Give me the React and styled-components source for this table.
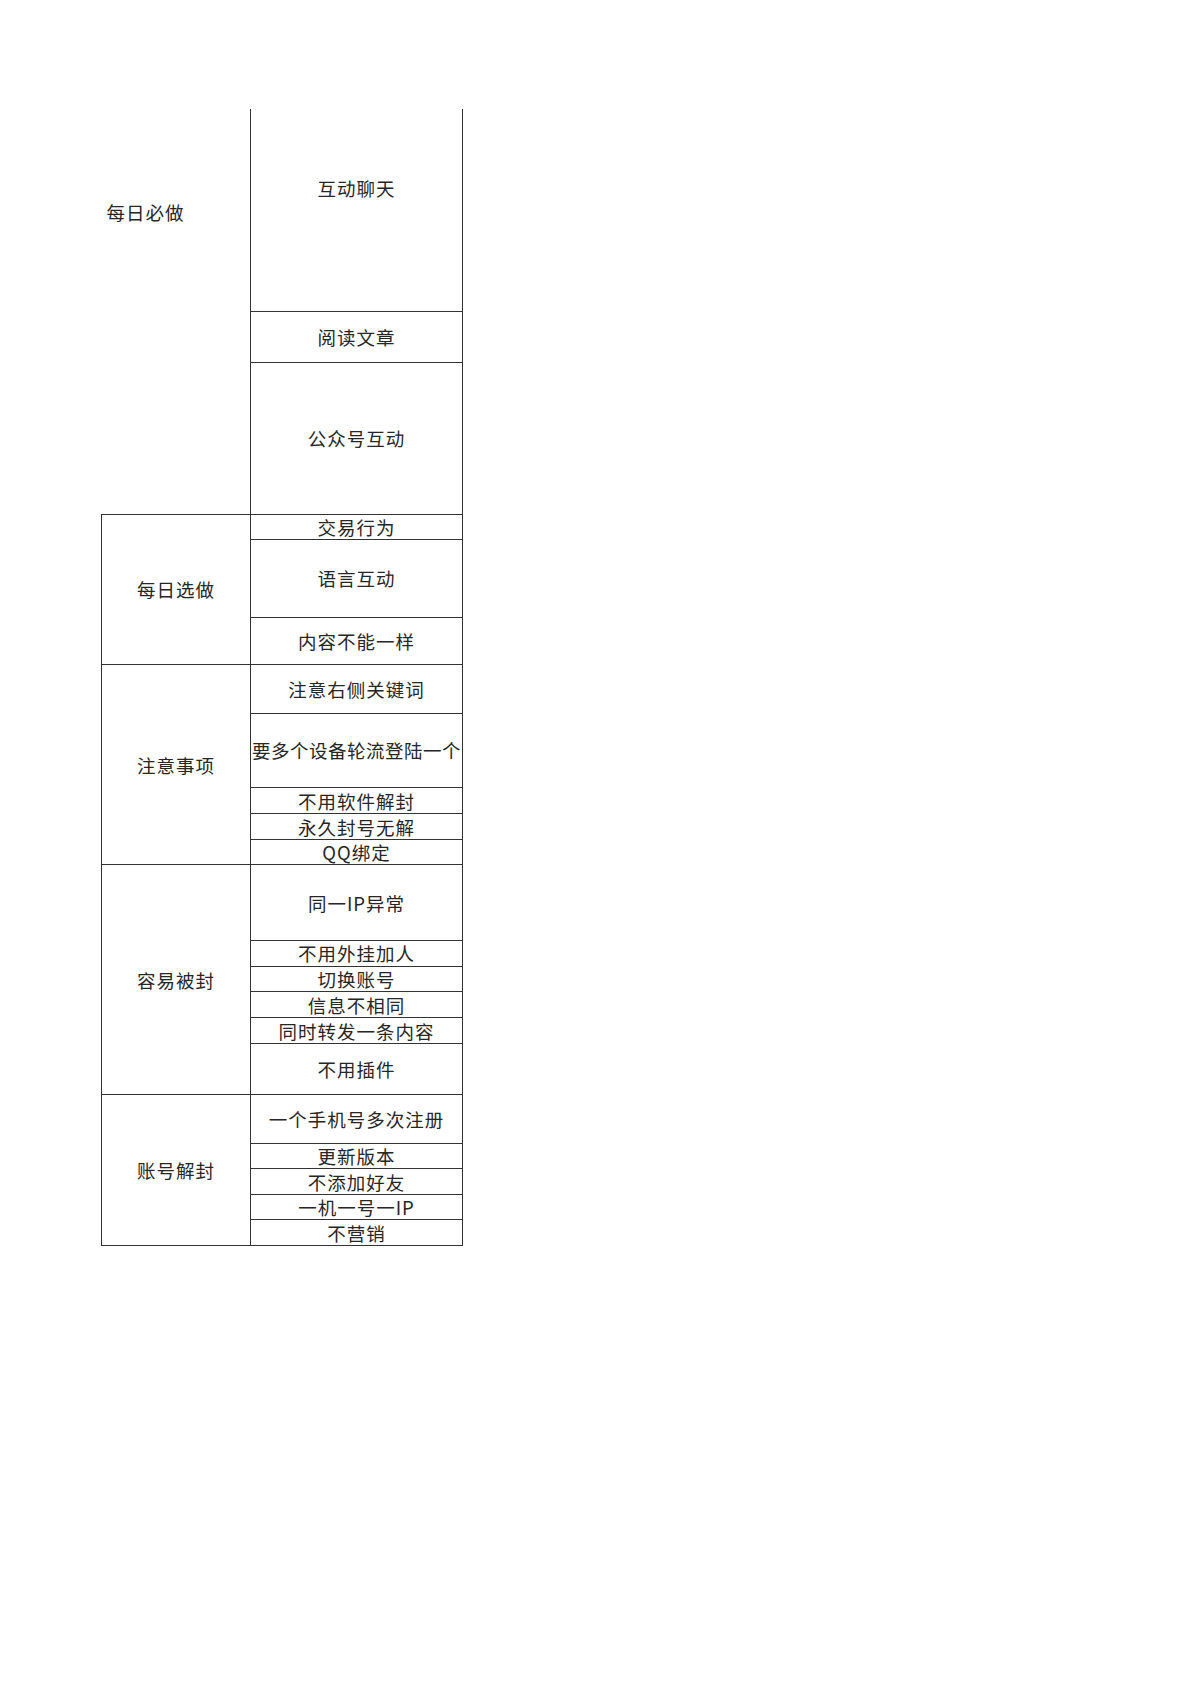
import styled, { createGlobalStyle } from "styled-components";

const GlobalStyle = createGlobalStyle`
  html, body {
    margin: 0;
    padding: 0;
    background: #fff;
  }
`;

const Page = styled.div`
  width: 1200px;
  min-height: 1698px;
  padding: 109px 0 0 101px;
  box-sizing: border-box;
  font-family: "Noto Sans CJK SC", "Noto Sans", sans-serif;
  color: #262626;
`;

const Sheet = styled.table`
  border-collapse: collapse;
  table-layout: fixed;
  width: 361px;
`;

const Col = styled.col`
  width: ${(p) => p.$w}px;
`;

const Row = styled.tr`
  height: ${(p) => p.$h}px;
`;

const Label = styled.td`
  box-sizing: border-box;
  padding: 0;
  border: ${(p) => (p.$open ? "none" : "1.3px solid #333")};
  border-right: 1.3px solid #333;
  font-size: 18.5px;
  letter-spacing: 1px;
  line-height: 22px;
  text-align: ${(p) => (p.$open ? "left" : "center")};
  vertical-align: ${(p) => (p.$open ? "top" : "middle")};
  padding-left: ${(p) => (p.$open ? "5px" : "0")};
  padding-top: ${(p) => (p.$open ? "92px" : "0")};
`;

const Item = styled.td`
  box-sizing: border-box;
  padding: 0;
  border: 1.3px solid #333;
  border-top: ${(p) => (p.$noTop ? "none" : "1.3px solid #333")};
  font-size: 18.5px;
  letter-spacing: ${(p) => (p.$tight ? 0.5 : 1)}px;
  line-height: 20px;
  text-align: center;
  white-space: nowrap;
  overflow: hidden;
  vertical-align: ${(p) => (p.$pt ? "top" : "middle")};
  padding-top: ${(p) => p.$pt || 0}px;
`;

const sections = [
  {
    label: "每日必做",
    open: true,
    rows: [
      { t: "互动聊天", h: 202, pt: 69, noTop: true },
      { t: "阅读文章", h: 51 },
      { t: "公众号互动", h: 152 },
    ],
  },
  {
    label: "每日选做",
    rows: [
      { t: "交易行为", h: 25.5 },
      { t: "语言互动", h: 77.5 },
      { t: "内容不能一样", h: 47.5 },
    ],
  },
  {
    label: "注意事项",
    rows: [
      { t: "注意右侧关键词", h: 48.5 },
      { t: "要多个设备轮流登陆一个", h: 74.5, tight: true },
      { t: "不用软件解封", h: 26 },
      { t: "永久封号无解", h: 26 },
      { t: "QQ绑定", h: 25.2 },
    ],
  },
  {
    label: "容易被封",
    rows: [
      { t: "同一IP异常", h: 76 },
      { t: "不用外挂加人", h: 25.6 },
      { t: "切换账号", h: 25.7 },
      { t: "信息不相同", h: 26 },
      { t: "同时转发一条内容", h: 25.3 },
      { t: "不用插件", h: 51.7 },
    ],
  },
  {
    label: "账号解封",
    rows: [
      { t: "一个手机号多次注册", h: 48.3 },
      { t: "更新版本", h: 25.4 },
      { t: "不添加好友", h: 26 },
      { t: "一机一号一IP", h: 25.3 },
      { t: "不营销", h: 26 },
    ],
  },
];

export default function App() {
  return (
    <Page>
      <GlobalStyle />
      <Sheet>
        <colgroup>
          <Col $w={149} />
          <Col $w={212} />
        </colgroup>
        <tbody>
          {sections.map((s) =>
            s.rows.map((r, i) => (
              <Row key={s.label + r.t} $h={r.h}>
                {i === 0 && (
                  <Label rowSpan={s.rows.length} $open={s.open}>
                    {s.label}
                  </Label>
                )}
                <Item $tight={r.tight} $pt={r.pt} $noTop={r.noTop}>
                  {r.t}
                </Item>
              </Row>
            ))
          )}
        </tbody>
      </Sheet>
    </Page>
  );
}
